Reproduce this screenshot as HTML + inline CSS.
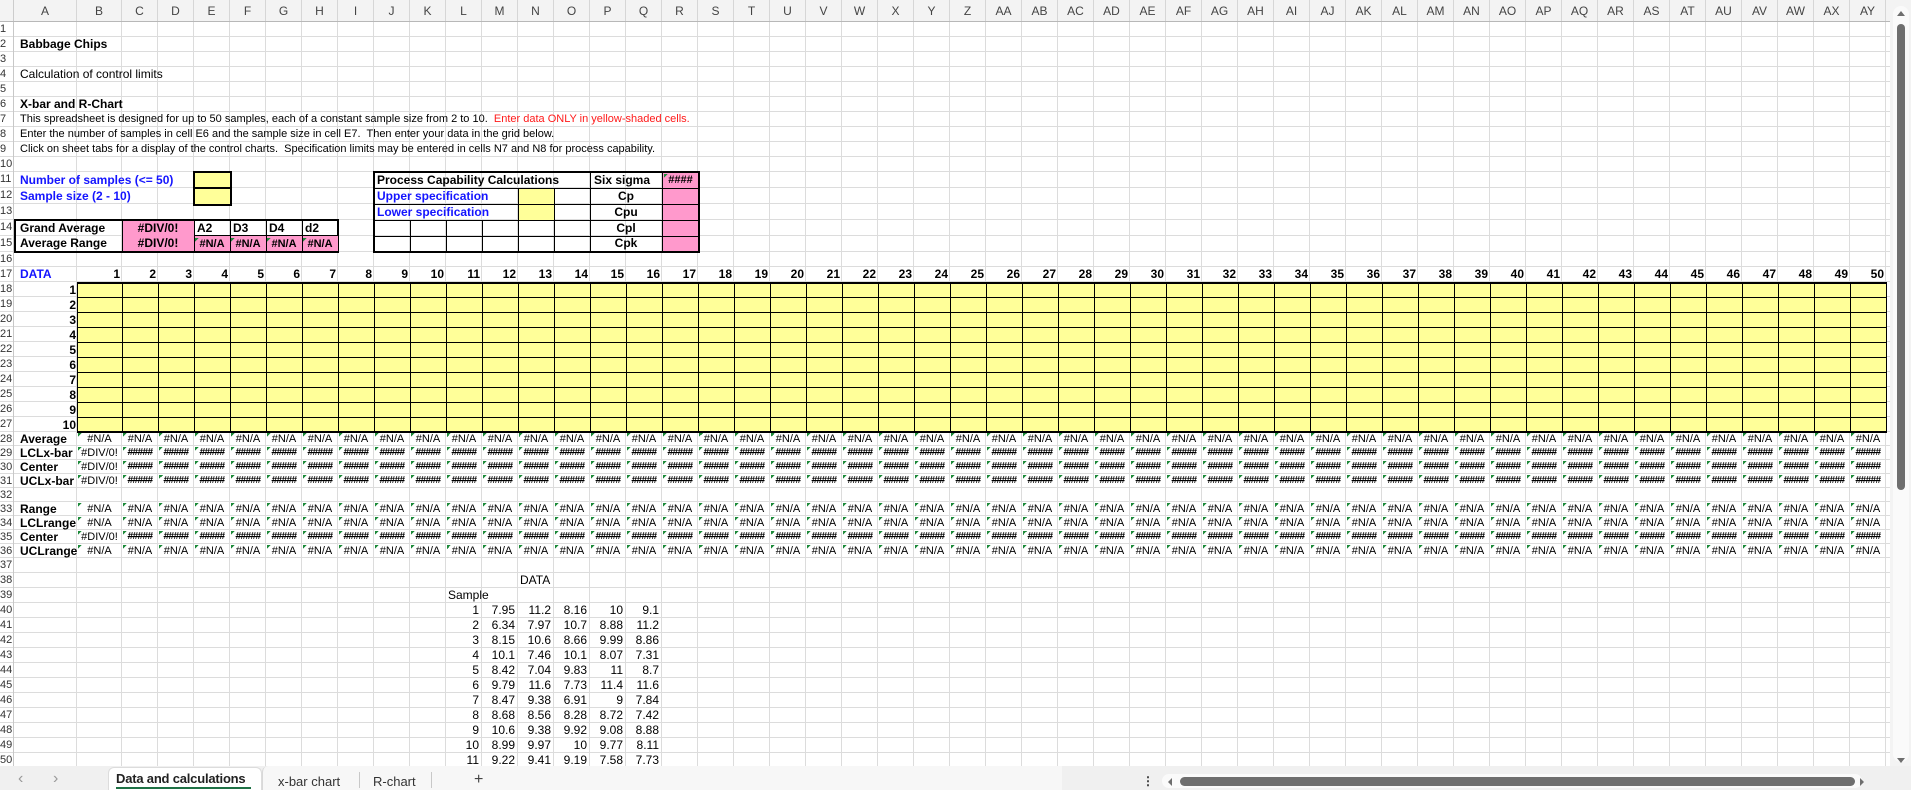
<!DOCTYPE html>
<html><head><meta charset="utf-8"><style>
*{margin:0;padding:0;box-sizing:border-box}
body{width:1911px;height:790px;overflow:hidden;background:#fff;font-family:"Liberation Sans",Arial,sans-serif;font-size:12px;color:#000;position:relative}
.abs{position:absolute}
#grid{position:absolute;left:14px;top:22px;width:1878px;height:744px;
background-image:linear-gradient(#dcdcdc,#dcdcdc),linear-gradient(#dcdcdc,#dcdcdc),repeating-linear-gradient(90deg,transparent 0 35px,#dcdcdc 35px 36px);
background-position:62px 0,107px 0,108px 0;background-size:1px 100%,1px 100%,1800px 100%;background-repeat:no-repeat}
#rows{position:absolute;left:0;top:22px;width:1890px}
#rows div{border-bottom:1px solid #dcdcdc;position:relative;white-space:nowrap}
#rows div span.n{position:absolute;left:0;top:0;width:16px;font-size:11px;color:#333;line-height:14px;overflow:hidden}
.h15{height:15px}.h16{height:16px}.h14{height:14px}
#colh{position:absolute;left:0;top:0;width:1892px;height:22px;background:#f3f3f3;border-bottom:1px solid #b8b8b8;display:flex;font-size:12px;color:#444}
#colh span{border-right:1px solid #d6d6d6;text-align:center;line-height:22px;flex:none;width:36px}
.t{position:absolute;white-space:nowrap;line-height:15px}
.b{font-weight:bold}
.blue{color:#1414ff}
.s9{font-size:11px}
.flex{position:absolute;display:flex;left:77px}
.flex span{flex:none;width:36px;white-space:nowrap;overflow:hidden}
.flex span:first-child{width:45px}
.num span{text-align:right;padding-right:2px;font-weight:bold;line-height:15px}
.err span{text-align:center;font-size:11px;line-height:14px;background:linear-gradient(135deg,#1d8a3a 50%,transparent 50%) 1px 1px/4px 4px no-repeat}
.hash span{font-size:10px;letter-spacing:-0.6px;text-decoration:line-through;font-weight:bold}
#yel{position:absolute;left:77px;top:282px;width:1810px;height:151px;background-color:#ffff99;border-top:2px solid #000;border-bottom:2px solid #000;border-left:1px solid #000;
background-image:repeating-linear-gradient(180deg,transparent 0 14px,#000 14px 15px),linear-gradient(#000,#000),repeating-linear-gradient(90deg,transparent 0 35px,#000 35px 36px);
background-position:0 -1px,44px 0,45px 0;background-size:100% 150px,1px 100%,1765px 100%;background-repeat:no-repeat}
.dat{position:absolute;display:flex;left:446px}
.dat span{flex:none;width:36px;text-align:right;padding-right:3px;font-size:12px;line-height:15px}
</style></head><body>
<div id="grid"></div>
<div id="colh"><span style="width:14px;border-right:1px solid #ccc"></span><span style="width:63px">A</span><span style="width:45px">B</span><span>C</span><span>D</span><span>E</span><span>F</span><span>G</span><span>H</span><span>I</span><span>J</span><span>K</span><span>L</span><span>M</span><span>N</span><span>O</span><span>P</span><span>Q</span><span>R</span><span>S</span><span>T</span><span>U</span><span>V</span><span>W</span><span>X</span><span>Y</span><span>Z</span><span>AA</span><span>AB</span><span>AC</span><span>AD</span><span>AE</span><span>AF</span><span>AG</span><span>AH</span><span>AI</span><span>AJ</span><span>AK</span><span>AL</span><span>AM</span><span>AN</span><span>AO</span><span>AP</span><span>AQ</span><span>AR</span><span>AS</span><span>AT</span><span>AU</span><span>AV</span><span>AW</span><span>AX</span><span>AY</span></div>
<div id="rows">
<div class="h15"><span class="n">1</span></div><div class="h15"><span class="n">2</span></div><div class="h15"><span class="n">3</span></div><div class="h15"><span class="n">4</span></div><div class="h15"><span class="n">5</span></div><div class="h15"><span class="n">6</span></div><div class="h15"><span class="n">7</span></div><div class="h15"><span class="n">8</span></div><div class="h15"><span class="n">9</span></div><div class="h15"><span class="n">10</span></div>
<div class="h16"><span class="n">11</span></div><div class="h16"><span class="n">12</span></div><div class="h16"><span class="n">13</span></div><div class="h16"><span class="n">14</span></div><div class="h16"><span class="n">15</span></div>
<div class="h15"><span class="n">16</span></div><div class="h15"><span class="n">17</span></div><div class="h15"><span class="n">18</span></div><div class="h15"><span class="n">19</span></div><div class="h15"><span class="n">20</span></div><div class="h15"><span class="n">21</span></div><div class="h15"><span class="n">22</span></div><div class="h15"><span class="n">23</span></div><div class="h15"><span class="n">24</span></div><div class="h15"><span class="n">25</span></div><div class="h15"><span class="n">26</span></div><div class="h15"><span class="n">27</span></div>
<div class="h14"><span class="n">28</span></div><div class="h14"><span class="n">29</span></div><div class="h14"><span class="n">30</span></div><div class="h14"><span class="n">31</span></div><div class="h14"><span class="n">32</span></div><div class="h14"><span class="n">33</span></div><div class="h14"><span class="n">34</span></div><div class="h14"><span class="n">35</span></div><div class="h14"><span class="n">36</span></div>
<div class="h15"><span class="n">37</span></div><div class="h15"><span class="n">38</span></div><div class="h15"><span class="n">39</span></div><div class="h15"><span class="n">40</span></div><div class="h15"><span class="n">41</span></div><div class="h15"><span class="n">42</span></div><div class="h15"><span class="n">43</span></div><div class="h15"><span class="n">44</span></div><div class="h15"><span class="n">45</span></div><div class="h15"><span class="n">46</span></div><div class="h15"><span class="n">47</span></div><div class="h15"><span class="n">48</span></div><div class="h15"><span class="n">49</span></div><div class="h15"><span class="n">50</span></div>
</div>
<div class="abs" style="left:0;top:22px;width:14px;height:744px;border-right:1px solid #c8c8c8"></div>

<div class="t b" style="left:20px;top:37px">Babbage Chips</div>
<div class="t" style="left:20px;top:67px">Calculation of control limits</div>
<div class="t b" style="left:20px;top:97px">X-bar and R-Chart</div>
<div class="t s9" style="left:20px;top:112px">This spreadsheet is designed for up to 50 samples, each of a constant sample size from 2 to 10.&nbsp; <span style="color:#ff1a1a">Enter data ONLY in yellow-shaded cells.</span></div>
<div class="t s9" style="left:20px;top:127px">Enter the number of samples in cell E6 and the sample size in cell E7.&nbsp; Then enter your data in the grid below.</div>
<div class="t s9" style="left:20px;top:142px">Click on sheet tabs for a display of the control charts.&nbsp; Specification limits may be entered in cells N7 and N8 for process capability.</div>

<div class="t b blue" style="left:20px;top:173px">Number of samples (&lt;= 50)</div>
<div class="t b blue" style="left:20px;top:189px">Sample size (2 - 10)</div>
<div class="abs" style="left:193px;top:171px;width:39px;height:35px;background:#ffff99;border:2px solid #000"></div>
<div class="abs" style="left:195px;top:187px;width:35px;height:2px;background:#000"></div>

<div class="abs" style="left:14px;top:219px;width:325px;height:34px;border:2px solid #000"></div>
<div class="abs" style="left:122px;top:221px;width:72px;height:30px;background:#ff99cc;border-left:1px solid #000"></div>
<div class="abs" style="left:194px;top:236px;width:144px;height:15px;background:#ff99cc"></div>
<div class="abs" style="left:194px;top:221px;width:1px;height:30px;background:#000"></div>
<div class="abs" style="left:230px;top:221px;width:1px;height:30px;background:#000"></div>
<div class="abs" style="left:266px;top:221px;width:1px;height:30px;background:#000"></div>
<div class="abs" style="left:302px;top:221px;width:1px;height:30px;background:#000"></div>
<div class="abs" style="left:194px;top:235px;width:144px;height:1px;background:#000"></div>
<div class="t b" style="left:20px;top:221px">Grand Average</div>
<div class="t b" style="left:20px;top:236px">Average Range</div>
<div class="t b" style="left:122px;top:221px;width:72px;text-align:center">#DIV/0!</div>
<div class="t b" style="left:122px;top:236px;width:72px;text-align:center">#DIV/0!</div>
<div class="t b" style="left:197px;top:221px">A2</div><div class="t b" style="left:233px;top:221px">D3</div><div class="t b" style="left:269px;top:221px">D4</div><div class="t b" style="left:305px;top:221px">d2</div>
<div class="flex err" style="left:194px;top:237px"><span style="width:36px;font-weight:bold">#N/A</span><span style="font-weight:bold">#N/A</span><span style="font-weight:bold">#N/A</span><span style="font-weight:bold">#N/A</span></div>

<div class="abs" style="left:373px;top:171px;width:327px;height:82px;border:2px solid #000"></div>
<div class="abs" style="left:662px;top:173px;width:36px;height:78px;background:#ff99cc;border-left:1px solid #000"></div>
<div class="abs" style="left:518px;top:189px;width:36px;height:31px;background:#ffff99"></div>
<div class="abs" style="left:590px;top:173px;width:1px;height:78px;background:#000"></div>
<div class="abs" style="left:518px;top:189px;width:1px;height:62px;background:#000"></div>
<div class="abs" style="left:554px;top:189px;width:1px;height:62px;background:#000"></div>
<div class="abs" style="left:410px;top:221px;width:1px;height:30px;background:#000"></div>
<div class="abs" style="left:446px;top:221px;width:1px;height:30px;background:#000"></div>
<div class="abs" style="left:482px;top:221px;width:1px;height:30px;background:#000"></div>
<div class="abs" style="left:375px;top:188px;width:323px;height:1px;background:#000"></div>
<div class="abs" style="left:375px;top:204px;width:323px;height:1px;background:#000"></div>
<div class="abs" style="left:375px;top:220px;width:323px;height:1px;background:#000"></div>
<div class="abs" style="left:375px;top:236px;width:323px;height:1px;background:#000"></div>
<div class="t b" style="left:377px;top:173px">Process Capability Calculations</div>
<div class="t b" style="left:594px;top:173px">Six sigma</div>
<div class="t b" style="left:663px;top:173px;width:35px;text-align:center;font-size:11px;background:linear-gradient(135deg,#1d8a3a 50%,transparent 50%) 1px 1px/4px 4px no-repeat">####</div>
<div class="t b blue" style="left:377px;top:189px">Upper specification</div>
<div class="t b blue" style="left:377px;top:205px">Lower specification</div>
<div class="t b" style="left:590px;top:189px;width:72px;text-align:center">Cp</div>
<div class="t b" style="left:590px;top:205px;width:72px;text-align:center">Cpu</div>
<div class="t b" style="left:590px;top:221px;width:72px;text-align:center">Cpl</div>
<div class="t b" style="left:590px;top:236px;width:72px;text-align:center">Cpk</div>

<div class="t b blue" style="left:20px;top:267px">DATA</div>
<div class="flex num" style="top:267px"><span>1</span><span>2</span><span>3</span><span>4</span><span>5</span><span>6</span><span>7</span><span>8</span><span>9</span><span>10</span><span>11</span><span>12</span><span>13</span><span>14</span><span>15</span><span>16</span><span>17</span><span>18</span><span>19</span><span>20</span><span>21</span><span>22</span><span>23</span><span>24</span><span>25</span><span>26</span><span>27</span><span>28</span><span>29</span><span>30</span><span>31</span><span>32</span><span>33</span><span>34</span><span>35</span><span>36</span><span>37</span><span>38</span><span>39</span><span>40</span><span>41</span><span>42</span><span>43</span><span>44</span><span>45</span><span>46</span><span>47</span><span>48</span><span>49</span><span>50</span></div>
<div id="yel"></div>
<div class="abs b" style="left:14px;top:283px;width:62px;text-align:right;line-height:15px">1<br>2<br>3<br>4<br>5<br>6<br>7<br>8<br>9<br>10</div>

<div class="abs b" style="left:20px;top:432px;line-height:14px">Average<br>LCLx-bar<br>Center<br>UCLx-bar<br>&nbsp;<br>Range<br>LCLrange<br>Center<br>UCLrange</div>
<div class="flex err" style="top:432px"><span>#N/A</span><span>#N/A</span><span>#N/A</span><span>#N/A</span><span>#N/A</span><span>#N/A</span><span>#N/A</span><span>#N/A</span><span>#N/A</span><span>#N/A</span><span>#N/A</span><span>#N/A</span><span>#N/A</span><span>#N/A</span><span>#N/A</span><span>#N/A</span><span>#N/A</span><span>#N/A</span><span>#N/A</span><span>#N/A</span><span>#N/A</span><span>#N/A</span><span>#N/A</span><span>#N/A</span><span>#N/A</span><span>#N/A</span><span>#N/A</span><span>#N/A</span><span>#N/A</span><span>#N/A</span><span>#N/A</span><span>#N/A</span><span>#N/A</span><span>#N/A</span><span>#N/A</span><span>#N/A</span><span>#N/A</span><span>#N/A</span><span>#N/A</span><span>#N/A</span><span>#N/A</span><span>#N/A</span><span>#N/A</span><span>#N/A</span><span>#N/A</span><span>#N/A</span><span>#N/A</span><span>#N/A</span><span>#N/A</span><span>#N/A</span></div>
<div class="flex err hash" style="top:446px"><span style="text-decoration:none;font-size:11px;letter-spacing:0;font-weight:normal">#DIV/0!</span><span>#####</span><span>#####</span><span>#####</span><span>#####</span><span>#####</span><span>#####</span><span>#####</span><span>#####</span><span>#####</span><span>#####</span><span>#####</span><span>#####</span><span>#####</span><span>#####</span><span>#####</span><span>#####</span><span>#####</span><span>#####</span><span>#####</span><span>#####</span><span>#####</span><span>#####</span><span>#####</span><span>#####</span><span>#####</span><span>#####</span><span>#####</span><span>#####</span><span>#####</span><span>#####</span><span>#####</span><span>#####</span><span>#####</span><span>#####</span><span>#####</span><span>#####</span><span>#####</span><span>#####</span><span>#####</span><span>#####</span><span>#####</span><span>#####</span><span>#####</span><span>#####</span><span>#####</span><span>#####</span><span>#####</span><span>#####</span><span>#####</span></div>
<div class="flex err hash" style="top:460px"><span style="text-decoration:none;font-size:11px;letter-spacing:0;font-weight:normal">#DIV/0!</span><span>#####</span><span>#####</span><span>#####</span><span>#####</span><span>#####</span><span>#####</span><span>#####</span><span>#####</span><span>#####</span><span>#####</span><span>#####</span><span>#####</span><span>#####</span><span>#####</span><span>#####</span><span>#####</span><span>#####</span><span>#####</span><span>#####</span><span>#####</span><span>#####</span><span>#####</span><span>#####</span><span>#####</span><span>#####</span><span>#####</span><span>#####</span><span>#####</span><span>#####</span><span>#####</span><span>#####</span><span>#####</span><span>#####</span><span>#####</span><span>#####</span><span>#####</span><span>#####</span><span>#####</span><span>#####</span><span>#####</span><span>#####</span><span>#####</span><span>#####</span><span>#####</span><span>#####</span><span>#####</span><span>#####</span><span>#####</span><span>#####</span></div>
<div class="flex err hash" style="top:474px"><span style="text-decoration:none;font-size:11px;letter-spacing:0;font-weight:normal">#DIV/0!</span><span>#####</span><span>#####</span><span>#####</span><span>#####</span><span>#####</span><span>#####</span><span>#####</span><span>#####</span><span>#####</span><span>#####</span><span>#####</span><span>#####</span><span>#####</span><span>#####</span><span>#####</span><span>#####</span><span>#####</span><span>#####</span><span>#####</span><span>#####</span><span>#####</span><span>#####</span><span>#####</span><span>#####</span><span>#####</span><span>#####</span><span>#####</span><span>#####</span><span>#####</span><span>#####</span><span>#####</span><span>#####</span><span>#####</span><span>#####</span><span>#####</span><span>#####</span><span>#####</span><span>#####</span><span>#####</span><span>#####</span><span>#####</span><span>#####</span><span>#####</span><span>#####</span><span>#####</span><span>#####</span><span>#####</span><span>#####</span><span>#####</span></div>
<div class="flex err" style="top:502px"><span>#N/A</span><span>#N/A</span><span>#N/A</span><span>#N/A</span><span>#N/A</span><span>#N/A</span><span>#N/A</span><span>#N/A</span><span>#N/A</span><span>#N/A</span><span>#N/A</span><span>#N/A</span><span>#N/A</span><span>#N/A</span><span>#N/A</span><span>#N/A</span><span>#N/A</span><span>#N/A</span><span>#N/A</span><span>#N/A</span><span>#N/A</span><span>#N/A</span><span>#N/A</span><span>#N/A</span><span>#N/A</span><span>#N/A</span><span>#N/A</span><span>#N/A</span><span>#N/A</span><span>#N/A</span><span>#N/A</span><span>#N/A</span><span>#N/A</span><span>#N/A</span><span>#N/A</span><span>#N/A</span><span>#N/A</span><span>#N/A</span><span>#N/A</span><span>#N/A</span><span>#N/A</span><span>#N/A</span><span>#N/A</span><span>#N/A</span><span>#N/A</span><span>#N/A</span><span>#N/A</span><span>#N/A</span><span>#N/A</span><span>#N/A</span></div>
<div class="flex err" style="top:516px"><span>#N/A</span><span>#N/A</span><span>#N/A</span><span>#N/A</span><span>#N/A</span><span>#N/A</span><span>#N/A</span><span>#N/A</span><span>#N/A</span><span>#N/A</span><span>#N/A</span><span>#N/A</span><span>#N/A</span><span>#N/A</span><span>#N/A</span><span>#N/A</span><span>#N/A</span><span>#N/A</span><span>#N/A</span><span>#N/A</span><span>#N/A</span><span>#N/A</span><span>#N/A</span><span>#N/A</span><span>#N/A</span><span>#N/A</span><span>#N/A</span><span>#N/A</span><span>#N/A</span><span>#N/A</span><span>#N/A</span><span>#N/A</span><span>#N/A</span><span>#N/A</span><span>#N/A</span><span>#N/A</span><span>#N/A</span><span>#N/A</span><span>#N/A</span><span>#N/A</span><span>#N/A</span><span>#N/A</span><span>#N/A</span><span>#N/A</span><span>#N/A</span><span>#N/A</span><span>#N/A</span><span>#N/A</span><span>#N/A</span><span>#N/A</span></div>
<div class="flex err hash" style="top:530px"><span style="text-decoration:none;font-size:11px;letter-spacing:0;font-weight:normal">#DIV/0!</span><span>#####</span><span>#####</span><span>#####</span><span>#####</span><span>#####</span><span>#####</span><span>#####</span><span>#####</span><span>#####</span><span>#####</span><span>#####</span><span>#####</span><span>#####</span><span>#####</span><span>#####</span><span>#####</span><span>#####</span><span>#####</span><span>#####</span><span>#####</span><span>#####</span><span>#####</span><span>#####</span><span>#####</span><span>#####</span><span>#####</span><span>#####</span><span>#####</span><span>#####</span><span>#####</span><span>#####</span><span>#####</span><span>#####</span><span>#####</span><span>#####</span><span>#####</span><span>#####</span><span>#####</span><span>#####</span><span>#####</span><span>#####</span><span>#####</span><span>#####</span><span>#####</span><span>#####</span><span>#####</span><span>#####</span><span>#####</span><span>#####</span></div>
<div class="flex err" style="top:544px"><span>#N/A</span><span>#N/A</span><span>#N/A</span><span>#N/A</span><span>#N/A</span><span>#N/A</span><span>#N/A</span><span>#N/A</span><span>#N/A</span><span>#N/A</span><span>#N/A</span><span>#N/A</span><span>#N/A</span><span>#N/A</span><span>#N/A</span><span>#N/A</span><span>#N/A</span><span>#N/A</span><span>#N/A</span><span>#N/A</span><span>#N/A</span><span>#N/A</span><span>#N/A</span><span>#N/A</span><span>#N/A</span><span>#N/A</span><span>#N/A</span><span>#N/A</span><span>#N/A</span><span>#N/A</span><span>#N/A</span><span>#N/A</span><span>#N/A</span><span>#N/A</span><span>#N/A</span><span>#N/A</span><span>#N/A</span><span>#N/A</span><span>#N/A</span><span>#N/A</span><span>#N/A</span><span>#N/A</span><span>#N/A</span><span>#N/A</span><span>#N/A</span><span>#N/A</span><span>#N/A</span><span>#N/A</span><span>#N/A</span><span>#N/A</span></div>

<div class="t" style="left:520px;top:573px">DATA</div>
<div class="t" style="left:448px;top:588px">Sample</div>
<div class="dat" style="top:603px"><span>1</span><span>7.95</span><span>11.2</span><span>8.16</span><span>10</span><span>9.1</span></div>
<div class="dat" style="top:618px"><span>2</span><span>6.34</span><span>7.97</span><span>10.7</span><span>8.88</span><span>11.2</span></div>
<div class="dat" style="top:633px"><span>3</span><span>8.15</span><span>10.6</span><span>8.66</span><span>9.99</span><span>8.86</span></div>
<div class="dat" style="top:648px"><span>4</span><span>10.1</span><span>7.46</span><span>10.1</span><span>8.07</span><span>7.31</span></div>
<div class="dat" style="top:663px"><span>5</span><span>8.42</span><span>7.04</span><span>9.83</span><span>11</span><span>8.7</span></div>
<div class="dat" style="top:678px"><span>6</span><span>9.79</span><span>11.6</span><span>7.73</span><span>11.4</span><span>11.6</span></div>
<div class="dat" style="top:693px"><span>7</span><span>8.47</span><span>9.38</span><span>6.91</span><span>9</span><span>7.84</span></div>
<div class="dat" style="top:708px"><span>8</span><span>8.68</span><span>8.56</span><span>8.28</span><span>8.72</span><span>7.42</span></div>
<div class="dat" style="top:723px"><span>9</span><span>10.6</span><span>9.38</span><span>9.92</span><span>9.08</span><span>8.88</span></div>
<div class="dat" style="top:738px"><span>10</span><span>8.99</span><span>9.97</span><span>10</span><span>9.77</span><span>8.11</span></div>
<div class="dat" style="top:753px"><span>11</span><span>9.22</span><span>9.41</span><span>9.19</span><span>7.58</span><span>7.73</span></div>

<div class="abs" style="left:1890px;top:0;width:21px;height:766px;background:#f3f3f3"></div>
<div class="abs" style="left:1893px;top:6px;width:16px;height:756px;background:#fafafa;border-radius:8px"></div>
<div class="abs" style="left:1897px;top:11px;width:0;height:0;border-left:4px solid transparent;border-right:4px solid transparent;border-bottom:5px solid #6e6e6e"></div>
<div class="abs" style="left:1897px;top:24px;width:8px;height:466px;background:#6e6e6e;border-radius:4px"></div>
<div class="abs" style="left:1897px;top:758px;width:0;height:0;border-left:4px solid transparent;border-right:4px solid transparent;border-top:5px solid #6e6e6e"></div>

<div class="abs" style="left:0;top:766px;width:1911px;height:24px;background:#f0f0f0"></div>
<div class="abs" style="left:262px;top:766px;width:800px;height:24px;background:#f7f7f7;border-left:1px solid #d8d8d8;border-radius:6px 0 0 0"></div>
<div class="abs" style="left:108px;top:767px;width:154px;height:23px;background:#fff;border-radius:6px 6px 0 0;border:1px solid #dcdcdc;border-bottom:none"></div>
<div class="t" style="left:18px;top:771px;font-size:16px;color:#999">&#8249;</div>
<div class="t" style="left:53px;top:771px;font-size:16px;color:#999">&#8250;</div>
<div class="t" style="left:116px;top:771px;font-size:13px;font-weight:bold;color:#222;letter-spacing:-0.2px">Data and calculations</div>
<div class="abs" style="left:116px;top:787px;width:135px;height:2px;background:#1e7145"></div>
<div class="t" style="left:278px;top:774px;font-size:13px;color:#333">x-bar chart</div>
<div class="abs" style="left:359px;top:772px;width:1px;height:16px;background:#c8c8c8"></div>
<div class="t" style="left:373px;top:774px;font-size:13px;color:#333">R-chart</div>
<div class="abs" style="left:431px;top:772px;width:1px;height:16px;background:#c8c8c8"></div>
<div class="t" style="left:474px;top:772px;font-size:16px;color:#444">+</div>
<div class="t" style="left:1142px;top:774px;font-size:12px;color:#333;font-weight:bold">&#8942;</div>
<div class="abs" style="left:1162px;top:774px;width:700px;height:14px;background:#fafafa;border-radius:7px"></div>
<div class="abs" style="left:1168px;top:778px;width:0;height:0;border-top:4px solid transparent;border-bottom:4px solid transparent;border-right:4px solid #6e6e6e"></div>
<div class="abs" style="left:1180px;top:777px;width:675px;height:9px;background:#6e6e6e;border-radius:5px"></div>
<div class="abs" style="left:1860px;top:778px;width:0;height:0;border-top:4px solid transparent;border-bottom:4px solid transparent;border-left:4px solid #6e6e6e"></div>
</body></html>
